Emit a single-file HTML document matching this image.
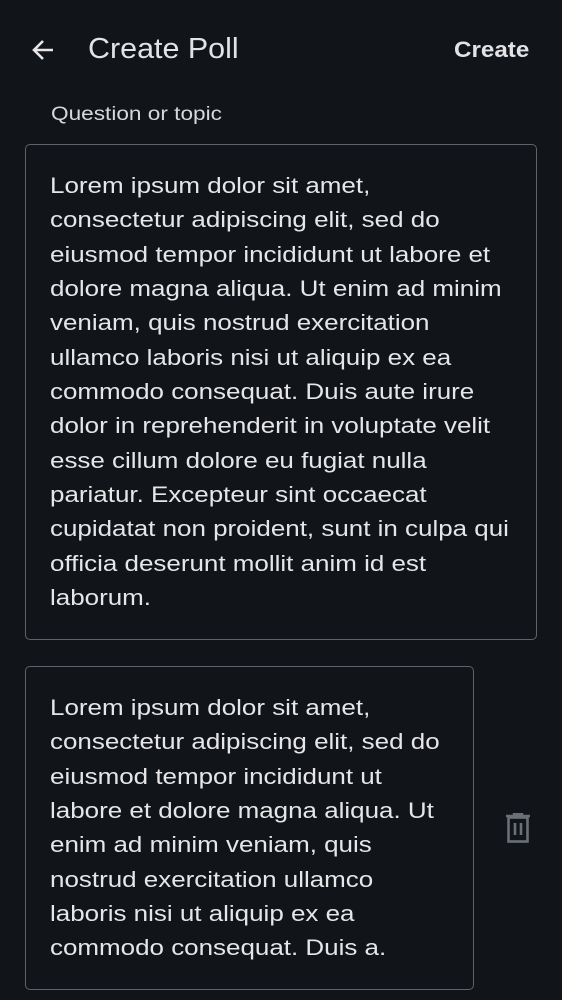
<!DOCTYPE html>
<html><head><style>
body{margin:0;width:562px;height:1000px;background:#111418;color:#e3e3e6;font-family:"Liberation Sans",sans-serif;overflow:hidden;position:relative}
.a{position:absolute}
.box{position:absolute;border:1.5px solid #5e6369;border-radius:5px;box-sizing:border-box}
.t{position:absolute;left:50px;font-size:22px;line-height:34.35px;white-space:nowrap;color:#e6e6e8;transform:scaleX(1.18);transform-origin:0 0}
</style></head><body>
<svg class="a" style="left:30px;top:37px" width="26" height="26" viewBox="0 0 26 26"><path d="M23 13H4M13 4L4 13l9 9" stroke="#e6e6e8" stroke-width="2.6" fill="none"/></svg>
<div class="a" style="left:88px;top:33px;font-size:29px;transform:scaleX(1.05);transform-origin:0 0">Create Poll</div>
<div class="a" style="left:454px;top:37px;font-size:22px;font-weight:bold;transform:scaleX(1.1);transform-origin:0 0">Create</div>
<div class="a" style="left:51px;top:104px;font-size:19px;color:#d8d8dc;transform:scaleX(1.19);transform-origin:0 0">Question or topic</div>
<div class="box" style="left:25px;top:144px;width:512px;height:496px"></div>
<div class="t" style="top:169px">Lorem ipsum dolor sit amet,<br>consectetur adipiscing elit, sed do<br>eiusmod tempor incididunt ut labore et<br>dolore magna aliqua. Ut enim ad minim<br>veniam, quis nostrud exercitation<br>ullamco laboris nisi ut aliquip ex ea<br>commodo consequat. Duis aute irure<br>dolor in reprehenderit in voluptate velit<br>esse cillum dolore eu fugiat nulla<br>pariatur. Excepteur sint occaecat<br>cupidatat non proident, sunt in culpa qui<br>officia deserunt mollit anim id est<br>laborum.</div>
<div class="box" style="left:25px;top:666px;width:449px;height:324px"></div>
<div class="t" style="top:691px">Lorem ipsum dolor sit amet,<br>consectetur adipiscing elit, sed do<br>eiusmod tempor incididunt ut<br>labore et dolore magna aliqua. Ut<br>enim ad minim veniam, quis<br>nostrud exercitation ullamco<br>laboris nisi ut aliquip ex ea<br>commodo consequat. Duis a.</div>
<svg class="a" style="left:505px;top:813px" width="26" height="30" viewBox="0 0 26 30"><path d="M1 3h24M9 3V1h8v2" stroke="#6b7078" stroke-width="2.4" fill="none"/><rect x="3.5" y="4.5" width="19" height="24" stroke="#6b7078" stroke-width="2.6" fill="none"/><path d="M10 10v12M16 10v12" stroke="#6b7078" stroke-width="2.6"/></svg>
</body></html>
